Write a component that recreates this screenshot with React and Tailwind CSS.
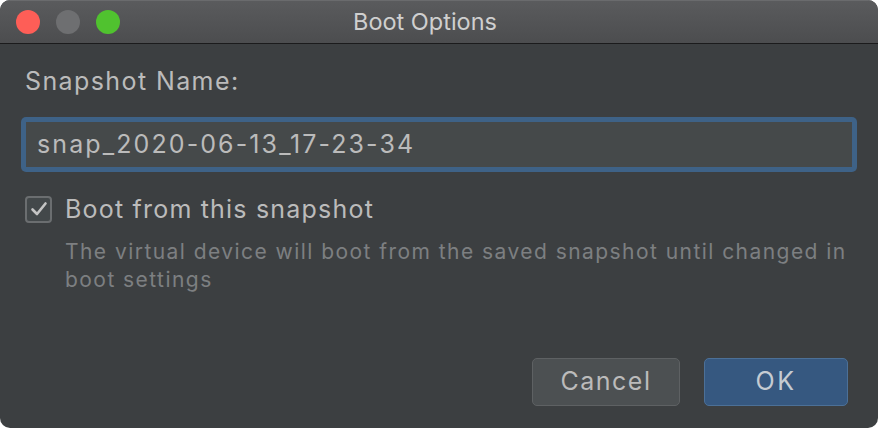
export default function App() {
  return (
    <div className="w-[878px] h-[428px] bg-white" style={{ fontFamily: "Inter, 'Noto Sans', sans-serif" }}>
      <div className="w-full h-full rounded-[10px] overflow-hidden flex flex-col bg-[#3c3f41]">
        {/* Title bar */}
        <div className="h-[43px] flex items-center bg-gradient-to-b from-[#5a5b5d] to-[#4c4d4f] border-t border-[#6a6b6d]">
          <div className="flex items-center gap-4 pl-4">
            <span className="w-6 h-6 rounded-full bg-[#fe5e57]" />
            <span className="w-6 h-6 rounded-full bg-[#6e6f71]" />
            <span className="w-6 h-6 rounded-full bg-[#50c22f]" />
          </div>
          <span className="ml-[233px] text-[23.5px] text-[#cfcfcf] leading-none">Boot Options</span>
        </div>
        <div className="h-px bg-[#1b1b1c]" />

        {/* Body */}
        <div className="flex-1 flex flex-col pt-[21px] px-[21px]">
          <div className="pl-1 text-[25px] leading-[32px] tracking-[1.4px] text-[#bbbbbb]">Snapshot Name:</div>

          <div className="mt-5 h-[55px] rounded-[5px] bg-[#3e6287] p-[5px]">
            <div className="h-full bg-[#45494a] flex items-center pl-[11px] text-[25px] tracking-[2.1px] text-[#bbbbbb]">
              snap_2020-06-13_17-23-34
            </div>
          </div>

          <div className="mt-[21px] flex items-center gap-[13px] pl-1">
            <span className="w-[27px] h-[27px] rounded-[4px] border-2 border-[#6b6e70] bg-[#43484a] flex items-center justify-center">
              <svg width="18" height="16" viewBox="0 0 18 16" fill="none">
                <path d="M2.5 8.5 L7 13 L15.5 2.5" stroke="#c4c4c4" strokeWidth="2.6" strokeLinecap="round" strokeLinejoin="round" />
              </svg>
            </span>
            <span className="text-[25px] leading-[32px] tracking-[1.2px] text-[#bbbbbb]">Boot from this snapshot</span>
          </div>

          <p className="mt-[13px] pl-[44px] pr-[6px] text-[21px] leading-[28px] tracking-[1.45px] text-[#7d7f81]">
            The virtual device will boot from the saved snapshot until changed in boot settings
          </p>

          <div className="mt-auto mb-[22px] flex justify-end gap-6 pr-[9px]">
            <button className="w-[148px] h-[48px] rounded-[5px] bg-[#4c5052] border border-[#5e6163] text-[25px] tracking-[1.5px] text-[#bbbbbb]">
              Cancel
            </button>
            <button className="w-[144px] h-[48px] rounded-[5px] bg-[#365880] border border-[#4c7097] text-[25px] tracking-[2.5px] text-[#c5cbd2]">
              OK
            </button>
          </div>
        </div>
      </div>
    </div>
  );
}
